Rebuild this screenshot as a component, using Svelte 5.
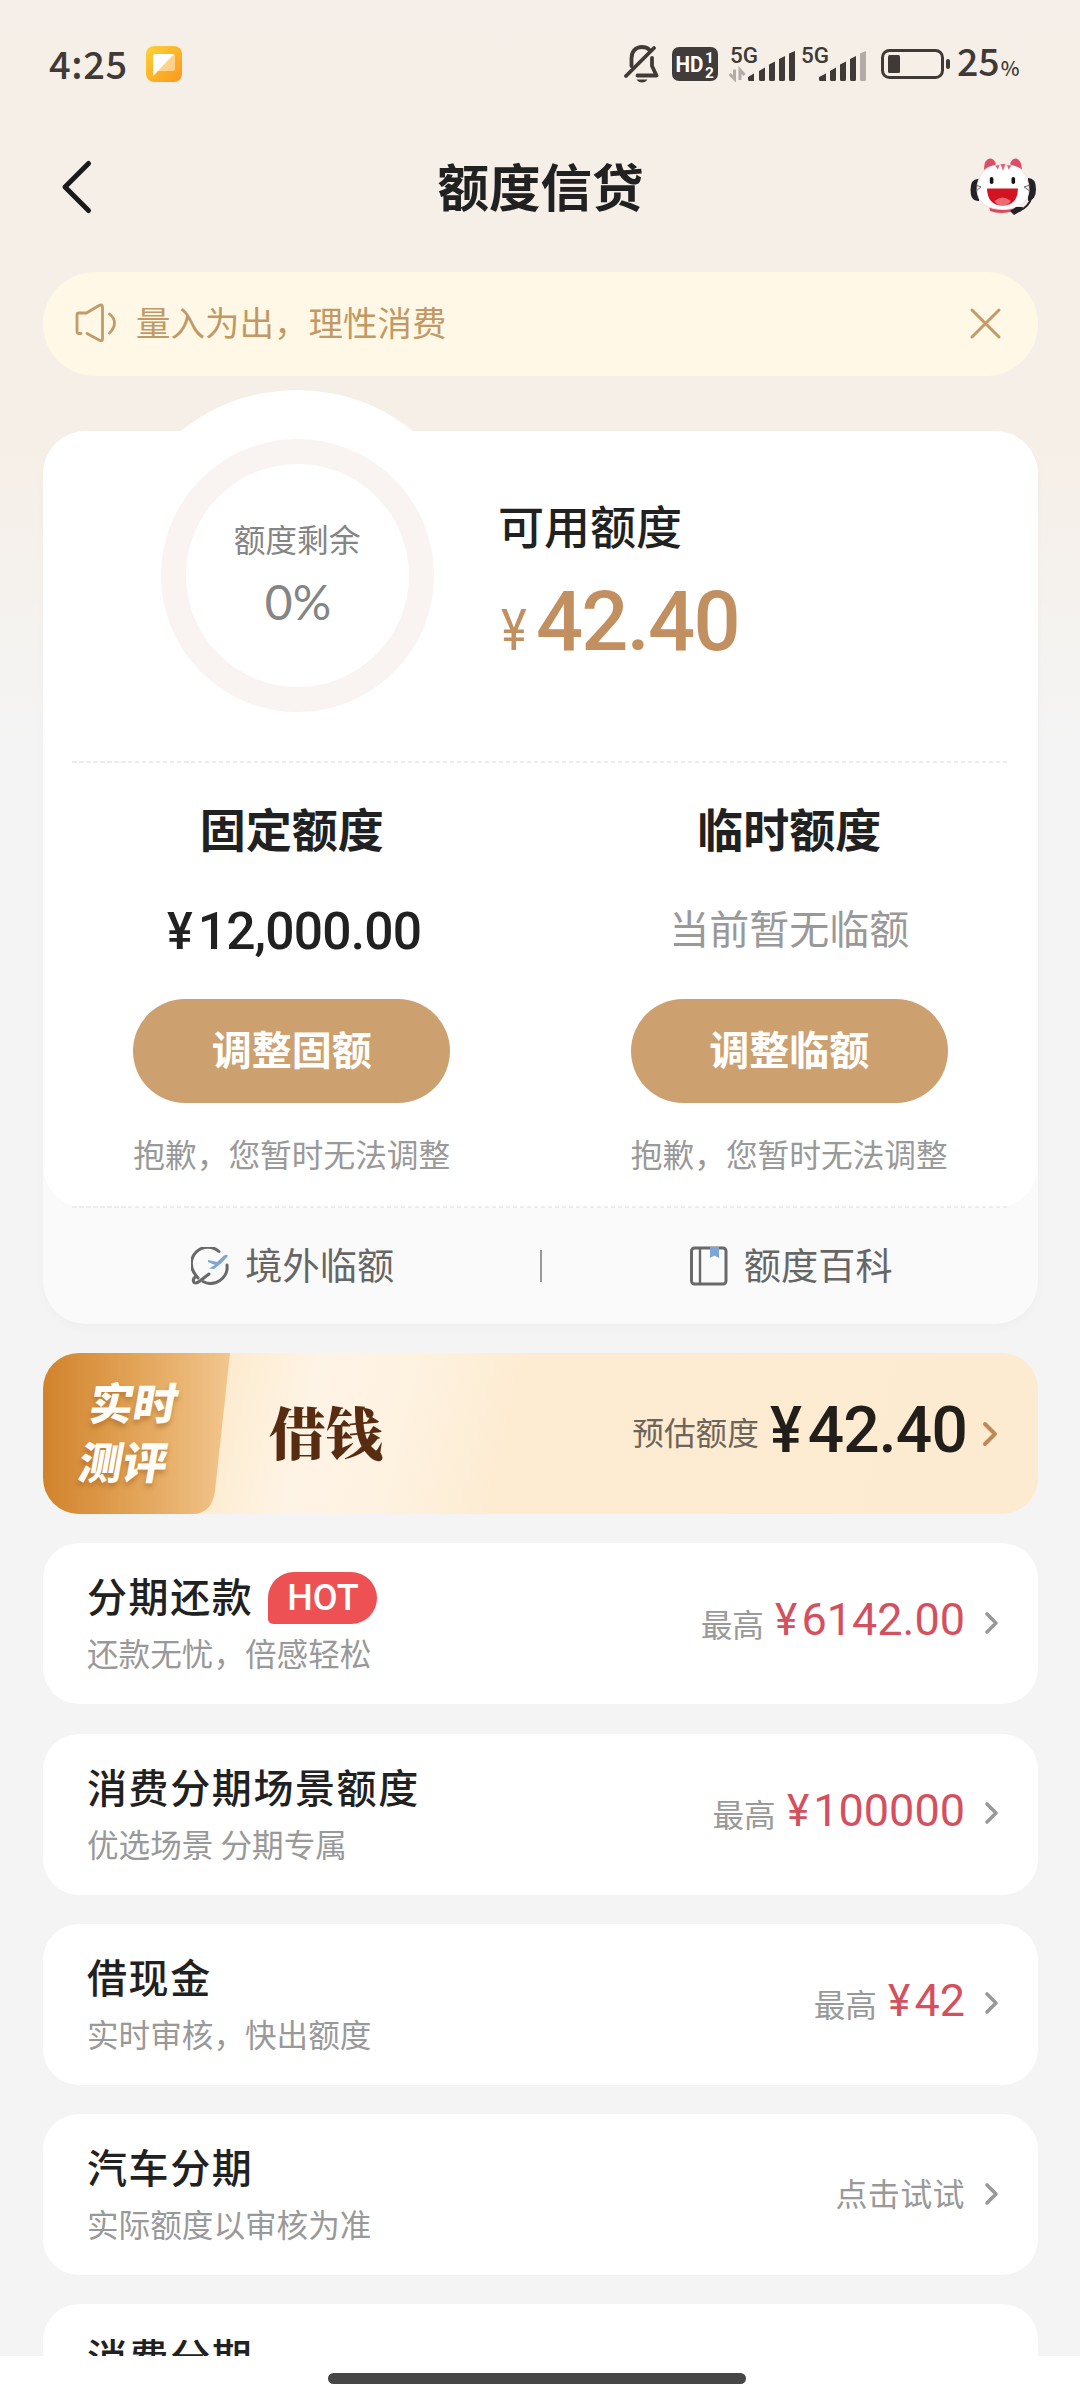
<script>
  const quotas = [
    { title: '固定额度', amount: '12,000.00', action: '调整固额', hint: '抱歉，您暂时无法调整' },
    { title: '临时额度', empty: '当前暂无临额', action: '调整临额', hint: '抱歉，您暂时无法调整' },
  ];

  const products = [
    { title: '分期还款', desc: '还款无忧，倍感轻松', hot: true, amount: '6142.00' },
    { title: '消费分期场景额度', desc: '优选场景 分期专属', amount: '100000' },
    { title: '借现金', desc: '实时审核，快出额度', amount: '42' },
    { title: '汽车分期', desc: '实际额度以审核为准', note: '点击试试' },
    { title: '消费分期', desc: '', note: '' },
  ];
</script>

<div class="page">
  <div class="scroll">
    <header class="status">
      <span class="time">4:25</span>
      <svg class="app" width="36" height="36" viewBox="0 0 36 36">
        <defs>
          <linearGradient id="appbg" x1="0" y1="0" x2="1" y2="1">
            <stop offset="0" stop-color="#fbd337" />
            <stop offset="1" stop-color="#fb961f" />
          </linearGradient>
        </defs>
        <rect width="36" height="36" rx="8" fill="url(#appbg)" />
        <path d="M9 8H27Q29 8 29 10V23Q29 25 27 25H12L7 30V10Q7 8 9 8Z" fill="#fff" fill-opacity=".45" />
        <path d="M9 8H28L7 30V10Q7 8 9 8Z" fill="#fff" />
      </svg>
      <div class="spacer"></div>
      <svg class="bell" width="35" height="38" viewBox="0 0 35 38" fill="none" stroke="#403a36" stroke-width="3.8" stroke-linecap="round" stroke-linejoin="round">
        <path d="M7.5 21V13.5C7.5 6 12 2 18 2C21 2 23.5 3 25.500 4.800" />
        <path d="M28 13V21L32.500 30.500H13.500" />
        <path d="M2 31L30 3" />
        <path d="M12.500 34.500H23.500Q21.500 37.500 18 37.500T12.500 34.500Z" fill="#403a36" stroke="none" />
      </svg>
      <svg class="hd" width="47" height="36" viewBox="0 0 47 36" fill="#fff" font-family="Roboto, sans-serif" font-weight="700">
        <rect y="1" width="46" height="34" rx="7" fill="#403c39" />
        <text x="3.500" y="25.500" font-size="21.500" textLength="28" lengthAdjust="spacingAndGlyphs">HD</text>
        <text x="33" y="17" font-size="15.500">1</text>
        <text x="33" y="31.500" font-size="15.500">2</text>
      </svg>
      <svg class="sim" width="68" height="42" viewBox="0 -8 68 42" fill="#403a36">
        <text x="1" y="15" font-family="Roboto, sans-serif" font-weight="500" font-size="21.500" textLength="28" lengthAdjust="spacingAndGlyphs">5G</text>
        <path d="M19 29L25 25.500V33H20.500Q19 33 19 31.500ZM30 23L36 19.500V31.500Q36 33 34.500 33H31.500Q30 33 30 31.500ZM40 16.500L46 13.500V31.500Q46 33 44.500 33H41.500Q40 33 40 31.500ZM50 11L56 8V31.500Q56 33 54.500 33H51.500Q50 33 50 31.500ZM60 5.500L66 3V31.500Q66 33 64.500 33H61.500Q60 33 60 31.500Z" />
        <path d="M5.500 21.500V31L.5 26M11 32V22L15.500 27" fill="none" stroke="#b3aba6" stroke-width="3" />
      </svg>
      <svg class="sim second" width="68" height="42" viewBox="0 -8 68 42" fill="#403a36">
        <text x="1" y="15" font-family="Roboto, sans-serif" font-weight="500" font-size="21.500" textLength="28" lengthAdjust="spacingAndGlyphs">5G</text>
        <path d="M19 29L26 25.500V33H20.500Q19 33 19 31.500ZM30 23L36 19.500V31.500Q36 33 34.500 33H31.500Q30 33 30 31.500ZM40 16.500L46 13.500V31.500Q46 33 44.500 33H41.500Q40 33 40 31.500ZM50 11L56 8V31.500Q56 33 54.500 33H51.500Q50 33 50 31.500Z" />
        <path d="M60 5.500L66 3V31.500Q66 33 64.500 33H61.500Q60 33 60 31.500Z" fill="#b3aba6" />
      </svg>
      <svg class="battery" width="69" height="30" viewBox="0 0 69 30">
        <rect x="1.500" y="1.500" width="60" height="27" rx="7" fill="none" stroke="#403a36" stroke-width="3" />
        <rect x="7" y="6" width="12" height="18" rx="1.500" fill="#403a36" />
        <rect x="65" y="10" width="4" height="10" rx="2" fill="#403a36" />
      </svg>
      <span class="pct">25<small>%</small></span>
    </header>

    <nav class="nav">
      <svg class="back" width="36" height="58" viewBox="0 0 36 58" fill="none" stroke="#1c191c" stroke-width="5" stroke-linecap="round" stroke-linejoin="round">
        <path d="M31.500 5.500L8 29L31.500 52.500" />
      </svg>
      <h1>额度信贷</h1>
      <svg class="mascot" width="66" height="58" viewBox="0 0 66 58">
        <path d="M9 21Q.5 20 .5 32T9 43ZM58 20Q66 20 66 31T58 43Z" fill="#262129" />
        <path d="M62 38Q59 49 49 53" fill="none" stroke="#262129" stroke-width="2" />
        <path d="M19 48Q31 54 45 48L43 53Q31 57 20 53Z" fill="#e0455c" />
        <path d="M14 13Q14 1 20 .5Q26 1 28 7Q33 6 38 7Q40 .5 46 .5Q52 1 52 13Q59 20 59 32Q58 51 33 51.500Q8 51 7 32Q7 20 14 13Z" fill="#fff" stroke="#efe3e1" stroke-width="1" />
        <path d="M14 12Q14 1 20 .5Q25 1 26 6.500Q19 8 14 12ZM40 6.500Q41 1 46 .5Q51 1 52 11.500Q47 8 40 6.500Z" fill="#dd4d65" />
        <path d="M30.500 6L33 13L35.500 6ZM25 7.500L28 11.500L29.500 7ZM37 7L38.500 11.500L41.500 7.500Z" fill="#df6475" />
        <path d="M17 30.500H48Q47.500 47.500 32.500 47.500T17 30.500Z" fill="#d51222" />
        <path d="M24.500 43Q32 36 41 43Q38 47.500 32.500 47.500T24.500 43Z" fill="#ee6b74" />
        <rect x="19.800" y="19" width="3.600" height="7" rx="1.800" fill="#151316" />
        <rect x="41.500" y="19" width="3.600" height="7" rx="1.800" fill="#151316" />
        <path d="M6 27L11 29L6 33M60 27L54 29L60 33" fill="none" stroke="#6b6468" stroke-width="1" />
        <path d="M40 53L46 49L53 49L51 53L44 57Z" fill="#262129" />
      </svg>
    </nav>

    <section class="notice">
      <svg class="speaker" width="42" height="40" viewBox="0 0 42 40" fill="none" stroke="#c49a69" stroke-width="2.800" stroke-linecap="round" stroke-linejoin="round">
        <path d="M6 30.500H4Q2 30.500 2 28.500V12Q2 10 4 10H11.500L24 2.500Q27.500 1 27.500 4V36Q27.500 38.500 25 37.500L12 30.500" />
        <path d="M34.500 11Q39.500 15 39.500 20T34.500 30" />
      </svg>
      <span class="notice-text">量入为出，理性消费</span>
      <svg class="close" width="33" height="33" viewBox="0 0 33 33" stroke="#c49a69" stroke-width="3" stroke-linecap="round">
        <path d="M3 3L30 30M30 3L3 30" />
      </svg>
    </section>

    <section class="card">
      <div class="inner">
        <div class="summary">
          <div class="halo">
            <div class="ring">
              <span class="ring-label">额度剩余</span>
              <span class="ring-value">0%</span>
            </div>
          </div>
          <div class="avail">
            <h2>可用额度</h2>
            <p class="avail-amount"><span class="yen">¥</span>42.40</p>
          </div>
        </div>
        <div class="dash"></div>
        <div class="quotas">
          {#each quotas as q}
            <div class="quota">
              <h2>{q.title}</h2>
              {#if q.amount}
                <p class="quota-amount"><span class="yen">¥</span>{q.amount}</p>
              {:else}
                <p class="quota-empty">{q.empty}</p>
              {/if}
              <button>{q.action}</button>
              <p class="hint">{q.hint}</p>
            </div>
          {/each}
        </div>
        <div class="dash low"></div>
      </div>
      <div class="links">
        <div class="link">
          <svg width="38" height="38" viewBox="0 0 38 38" fill="none" stroke="#696969" stroke-width="3" stroke-linecap="round">
            <path d="M28 4.500A16.500 16.500 0 0 0 4 27Q5 29 7 31" />
            <path d="M36 18A16.500 16.500 0 0 1 12 34.500" />
            <path d="M5 29Q1 32.500 3 35.500Q5.500 37 9.500 33.500L18 27" />
            <path d="M17 13L26 15L33 8.500Q36 7 37 9L30 16.500L23 22L18 21.500L24 18L17 15Z" fill="#7ca5d8" stroke="none" />
          </svg>
          <span>境外临额</span>
        </div>
        <i class="bar"></i>
        <div class="link">
          <svg width="38" height="40" viewBox="0 0 38 40" fill="none" stroke="#696969">
            <rect x="1.500" y="2" width="34.500" height="36" rx="3" stroke-width="3" />
            <path d="M10 2V38" stroke-width="2.400" />
            <path d="M20 1H29V12L24.500 9.500L20 12Z" fill="#7ca5d8" stroke="none" />
          </svg>
          <span>额度百科</span>
        </div>
      </div>
    </section>

    <section class="banner">
      <div class="tag">
        <svg class="tag-bg" width="188" height="161" viewBox="0 0 188 161">
          <defs>
            <linearGradient id="tagbg" x1="0" y1="0" x2="1" y2="0">
              <stop offset="0" stop-color="#d1832b" />
              <stop offset=".5" stop-color="#e2a458" />
              <stop offset="1" stop-color="#f2c68e" />
            </linearGradient>
          </defs>
          <path d="M0 0H187L172 138Q169 161 149 161H0Z" fill="url(#tagbg)" />
        </svg>
        <div class="tag-text">实时<br />测评</div>
      </div>
      <strong class="loan">借钱</strong>
      <div class="spacer"></div>
      <span class="est">预估额度</span>
      <span class="est-amount"><span class="yen">¥</span>42.40</span>
      <svg class="est-arrow" width="18" height="28" viewBox="0 0 18 28" fill="none" stroke="#bd8b59" stroke-width="4" stroke-linecap="round" stroke-linejoin="round">
        <path d="M3 4L13 14L3 24" />
      </svg>
    </section>

    {#each products as p}
      <section class="product">
        <div class="info">
          <div class="name">
            <h3>{p.title}</h3>
            {#if p.hot}<span class="hot">HOT</span>{/if}
          </div>
          <p>{p.desc}</p>
        </div>
        <div class="value">
          {#if p.amount}
            <span class="max">最高</span>
            <span class="num"><span class="yen">¥</span>{p.amount}</span>
          {:else}
            <span class="note">{p.note}</span>
          {/if}
          <svg width="16" height="26" viewBox="0 0 16 26" fill="none" stroke="#999" stroke-width="3.600" stroke-linecap="round" stroke-linejoin="round">
            <path d="M3 4L12 13L3 22" />
          </svg>
        </div>
      </section>
    {/each}
  </div>
  <footer class="home"><div class="pill"></div></footer>
</div>

<style>
  :global(body) { margin: 0; background: #fff; }
  .page {
    width: 1080px;
    height: 2400px;
    overflow: hidden;
    background: #fff;
    font-family: 'Noto Sans CJK SC', sans-serif;
    color: #212121;
  }
  .page :is(h1, h2, h3, p) { margin: 0; font-weight: 500; }
  .page svg { display: block; flex: none; }
  .scroll {
    height: 2356px;
    overflow: hidden;
    background: linear-gradient(180deg, #f6efe9 0, #f6efe7 440px, #f4f4f4 740px);
  }
  .spacer { flex: 1; }
  .yen { display: inline-block; width: .59em; transform: scaleX(.94); transform-origin: 0 50%; }

  .status {
    display: flex;
    align-items: center;
    box-sizing: border-box;
    height: 120px;
    padding: 8px 60px 0 49px;
    color: #403a36;
  }
  .time { font-size: 38px; line-height: 50px; font-weight: 500; width: 97px; margin-top: -3px; letter-spacing: .6px; }
  .bell { margin-right: 13px; }
  .hd { margin-right: 10px; }
  .sim { margin: -7px 3px 0 0; }
  .sim.second { margin-right: 13px; }
  .battery { margin-right: 7px; }
  .pct { font-size: 37.500px; line-height: 50px; font-weight: 500; margin-top: -1px; width: 63px; white-space: nowrap; }
  .pct small { font-size: 20px; margin-left: 1px; }

  .nav {
    display: flex;
    align-items: center;
    justify-content: space-between;
    box-sizing: border-box;
    height: 152px;
    padding: 0 44px 18px 57px;
  }
  .back { margin-right: 30px; }
  .nav h1 { font-size: 51.500px; line-height: 70px; font-weight: 700; margin: -5px 12px 0 0; }

  .notice {
    display: flex;
    align-items: center;
    box-sizing: border-box;
    height: 104px;
    margin: 0 42px 0 43px;
    padding: 0 36px 2px 32px;
    border-radius: 52px;
    background: #fff8e6;
  }
  .notice-text { flex: 1; margin: -5px 0 0 19px; font-size: 34.500px; line-height: 50px; color: #c29864; }

  .card {
    margin: 55px 42px 0 43px;
    height: 893px;
    border-radius: 43px;
    background: #fafafa;
    box-shadow: 0 4px 8px rgba(0, 0, 0, .025);
  }
  .inner { display: flex; flex-direction: column; height: 777px; border-radius: 43px; background: #fff; }
  .summary { display: flex; height: 330px; }
  .halo {
    display: flex;
    align-items: center;
    justify-content: center;
    flex: none;
    width: 370px;
    height: 370px;
    margin: -41px 0 0 69px;
    border-radius: 50%;
    background: #fff;
  }
  .ring {
    display: flex;
    flex-direction: column;
    align-items: center;
    box-sizing: border-box;
    width: 273px;
    height: 273px;
    padding-top: 51px;
    border: 25px solid #f9f4f2;
    border-radius: 50%;
    color: #858585;
  }
  .ring-label { font-size: 31.700px; line-height: 46px; }
  .ring-value { margin: 11px 0 0 2px; font: 400 48px/60px Lato, sans-serif; }
  .avail { margin: 63px 0 0 16px; }
  .avail h2 { font-size: 46px; line-height: 60px; }
  .avail .avail-amount { margin-top: 23px; font: 500 83px/90px Roboto, sans-serif; color: #c29060; letter-spacing: -1.800px; }
  .avail .yen { width: 35px; margin-left: 3px; font-size: 57px; font-weight: 400; line-height: 1; letter-spacing: 0; transform: scaleX(.86); }
  .dash {
    flex: none;
    height: 2px;
    margin: 0 29px;
    background: repeating-linear-gradient(90deg, #ececec 0 4.500px, transparent 4.500px 7px);
  }
  .quotas { display: flex; flex: 1; }
  .quota { display: flex; flex: 1; flex-direction: column; align-items: center; padding-top: 34px; }
  .quota h2 { font-size: 46px; line-height: 60px; font-weight: 700; }
  .quota .quota-amount { margin-top: 45px; padding-left: 5px; font: 500 51.500px/60px Roboto, sans-serif; letter-spacing: -.800px; }
  .quota .quota-empty { height: 60px; margin-top: 45px; font-size: 40px; line-height: 51px; font-weight: 400; color: #999; }
  .quota button {
    width: 317px;
    height: 104px;
    margin-top: 37px;
    padding: 0 0 7px;
    border: 0;
    border-radius: 52px;
    background: #cda16f;
    color: #fff;
    font: 700 40px/60px 'Noto Sans CJK SC', sans-serif;
  }
  .quota .hint { margin-top: 30px; font-size: 31.700px; line-height: 40px; font-weight: 400; color: #999; }
  .links { display: flex; align-items: center; height: 116px; }
  .link { display: flex; flex: 1; align-items: center; justify-content: center; gap: 16px; padding-left: 3px; color: #666; }
  .link span { margin-top: -5px; font-size: 37.200px; line-height: 50px; }
  .bar { width: 2px; height: 32px; background: #999; }

  .banner {
    display: flex;
    align-items: center;
    height: 161px;
    margin: 29px 42px 0 43px;
    border-radius: 36px;
    overflow: hidden;
    background: linear-gradient(103deg, #fdebcf 18%, #fef4e5 27%, #fef3e3 34%, #fdecd2 47%, #fdebd1 100%);
  }
  .tag { position: relative; width: 188px; height: 161px; }
  .tag-bg { position: absolute; left: 0; top: 0; }
  .tag-text {
    position: relative;
    margin: 19px 0 0 42px;
    width: 88px;
    font-size: 44px;
    line-height: 59px;
    font-weight: 900;
    color: #fffdf8;
    text-shadow: 0 4px 5px rgba(150, 85, 20, .45);
    transform: skewX(-10deg);
  }
  .loan { margin: -7px 0 0 38px; font: 900 57px/80px 'Noto Serif CJK SC', 'Noto Sans CJK SC', serif; color: #572c10; }
  .est { margin-top: -5px; font-size: 31.700px; line-height: 50px; color: #6d645a; }
  .est-amount { margin: -6px 0 0 11px; font: 500 64px/70px Roboto, sans-serif; letter-spacing: -.800px; color: #221f1b; }
  .est-arrow { margin: 0 38px 0 15px; }

  .product {
    display: flex;
    justify-content: space-between;
    box-sizing: border-box;
    height: 161px;
    margin: 29.250px 42px 0 43px;
    padding: 0 38px 0 44px;
    border-radius: 36px;
    background: #fff;
  }
  .info { padding-top: 24px; }
  .name { display: flex; align-items: center; height: 56px; }
  .name h3 { font-size: 40px; line-height: 56px; letter-spacing: 1.600px; }
  .hot {
    width: 109px;
    height: 52px;
    margin: 5px 0 0 15px;
    border-radius: 26px 26px 26px 5px;
    background: #ed5154;
    color: #fff;
    font: 500 36px/52px Roboto, sans-serif;
    text-align: center;
  }
  .info p { margin-top: 6px; font-size: 31.600px; line-height: 46px; font-weight: 400; color: #999; }
  .value { display: flex; align-items: center; height: 161px; padding-bottom: 2px; box-sizing: border-box; }
  .max { margin: 0 11px 0 0; font-size: 31.600px; line-height: 46px; color: #999; }
  .num { margin-top: -5px; font: 400 45px/60px Roboto, sans-serif; color: #d4505e; }
  .note { margin-top: -3px; font-size: 32px; line-height: 46px; letter-spacing: .400px; color: #999; }
  .value svg { margin-left: 19px; }

  .home { display: flex; justify-content: center; height: 44px; padding-right: 6px; background: #fff; }
  .pill { width: 418px; height: 11px; margin-top: 17px; border-radius: 6px; background: #464646; }
</style>
